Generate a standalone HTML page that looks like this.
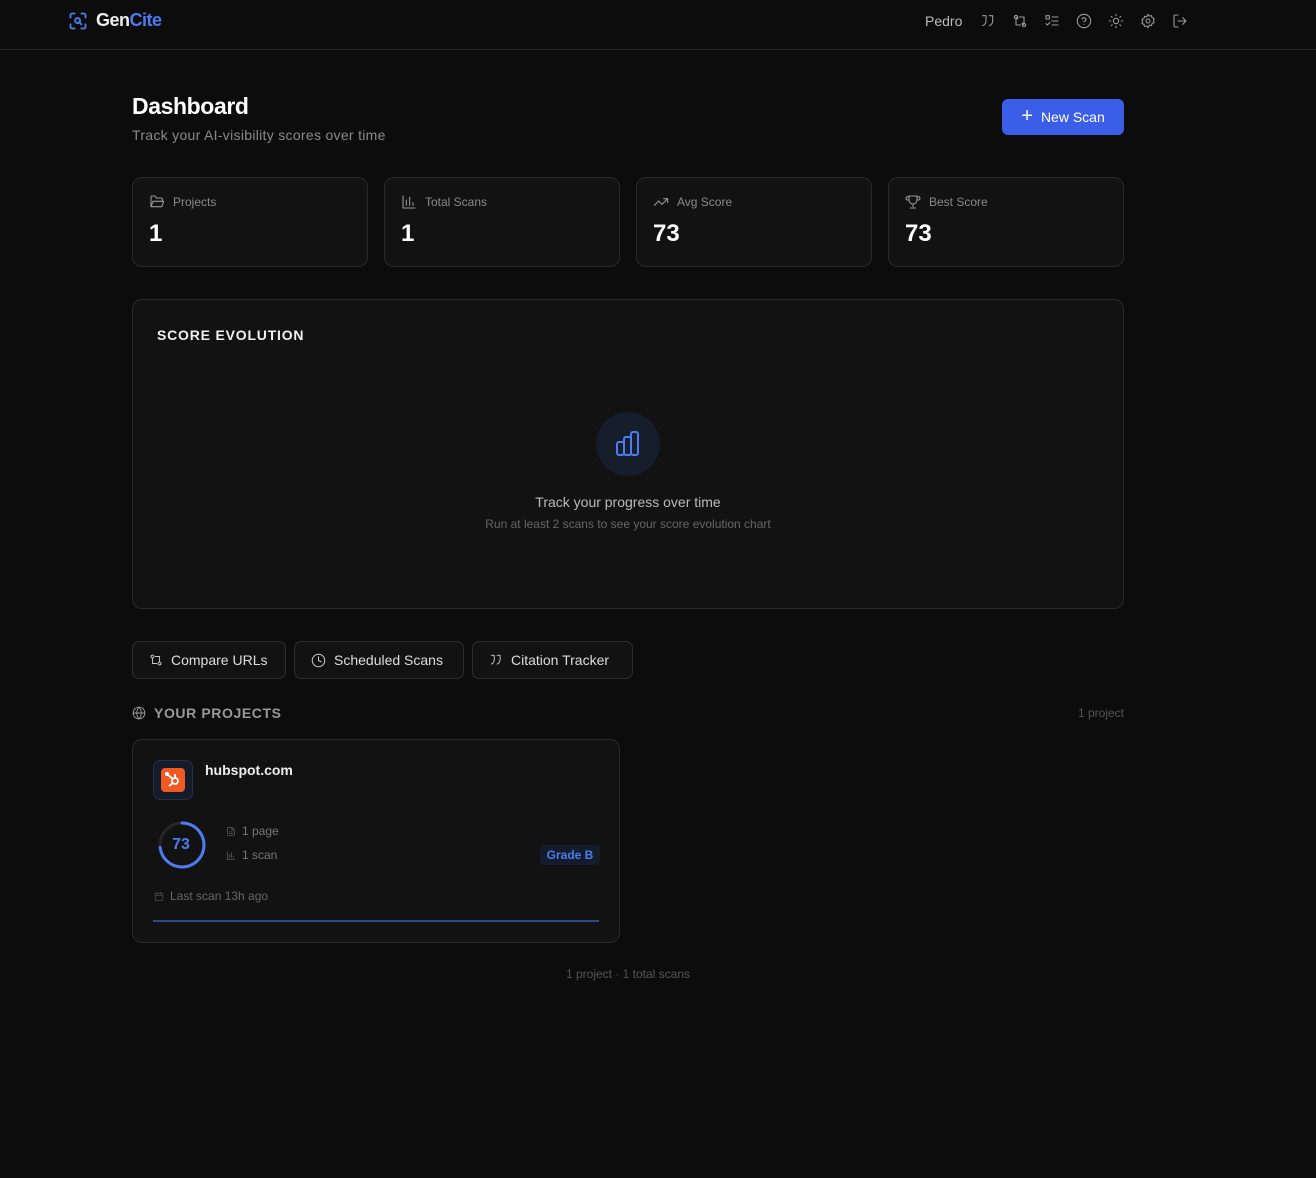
<!DOCTYPE html>
<html><head><meta charset="utf-8"><style>
*{box-sizing:border-box;margin:0;padding:0}
body{width:1316px;height:1178px;background:#0c0c0c;font-family:"Liberation Sans",sans-serif;color:#eee;position:relative;overflow:hidden}
.abs{position:absolute}
.nav{position:absolute;left:0;top:0;width:1316px;height:50px;border-bottom:1px solid #262626}
.card{position:absolute;background:#121212;border:1px solid #2a2a2a;border-radius:10px}
.ic{stroke:#9a9a9a;fill:none;stroke-width:1.6;stroke-linecap:round;stroke-linejoin:round}
.lbl{position:absolute;left:40px;top:17px;font-size:12px;color:#8a8a8a}
.val{position:absolute;left:16px;top:42px;font-size:24px;font-weight:bold;color:#fff}
.btn{position:absolute;top:641px;height:38px;background:#121212;border:1px solid #2e2e2e;border-radius:7px;font-size:14px;color:#ddd;display:flex;align-items:center;gap:8px;padding-left:16px}
</style></head><body>
<div class="nav">
<svg class="abs" style="left:68px;top:11px" width="20" height="20" viewBox="0 0 24 24" fill="none" stroke="#4c7cf0" stroke-width="2.2" stroke-linecap="round"><path d="M3 8V5a2 2 0 0 1 2-2h3M16 3h3a2 2 0 0 1 2 2v3M21 16v3a2 2 0 0 1-2 2h-3M8 21H5a2 2 0 0 1-2-2v-3"/><circle cx="11.5" cy="11.5" r="3"/><path d="M14 14l2 2"/></svg>
<div class="abs" style="left:96px;top:10px;font-size:18px;font-weight:bold;letter-spacing:-0.5px">Gen<span style="color:#4c7cf0">Cite</span></div>
<div class="abs" style="left:925px;top:13px;font-size:14px;color:#bbb">Pedro</div>
<svg class="abs ic" style="left:980px;top:13px" width="16" height="16" viewBox="0 0 24 24"><path d="M4 4h5v7c0 4-2 7-5 8M14 4h5v7c0 4-2 7-5 8"/></svg>
<svg class="abs ic" style="left:1012px;top:13px" width="16" height="16" viewBox="0 0 24 24"><circle cx="6" cy="6" r="2.5"/><circle cx="18" cy="18" r="2.5"/><path d="M6 9v9h7M18 15V6h-7M15 15l3 3M9 9l-3-3"/></svg>
<svg class="abs ic" style="left:1044px;top:13px" width="16" height="16" viewBox="0 0 24 24"><rect x="3" y="4" width="5" height="5"/><path d="M3 16l2 2 4-4M12 6h9M12 12h9M12 18h9"/></svg>
<svg class="abs ic" style="left:1076px;top:13px" width="16" height="16" viewBox="0 0 24 24"><circle cx="12" cy="12" r="10"/><path d="M9.1 9a3 3 0 0 1 5.8 1c0 2-3 3-3 3M12 17h.01"/></svg>
<svg class="abs ic" style="left:1108px;top:13px" width="16" height="16" viewBox="0 0 24 24"><circle cx="12" cy="12" r="4"/><path d="M12 2v2M12 20v2M4.9 4.9l1.4 1.4M17.7 17.7l1.4 1.4M2 12h2M20 12h2M4.9 19.1l1.4-1.4M17.7 6.3l1.4-1.4"/></svg>
<svg class="abs ic" style="left:1140px;top:13px" width="16" height="16" viewBox="0 0 24 24"><circle cx="12" cy="12" r="3"/><path d="M12 2l2 2.5 3.2-.6.9 3.1 3 1.3-1 3.1 1 3.1-3 1.3-.9 3.1-3.2-.6L12 22l-2-2.5-3.2.6-.9-3.1-3-1.3 1-3.1-1-3.1 3-1.3.9-3.1 3.2.6z"/></svg>
<svg class="abs ic" style="left:1172px;top:13px" width="16" height="16" viewBox="0 0 24 24"><path d="M9 21H5a2 2 0 0 1-2-2V5a2 2 0 0 1 2-2h4M16 17l5-5-5-5M21 12H9"/></svg>
</div>

<div class="abs" style="left:132px;top:93px;font-size:23px;font-weight:bold;color:#fff;letter-spacing:-0.4px">Dashboard</div>
<div class="abs" style="left:132px;top:127px;font-size:14px;color:#8a8a8a;letter-spacing:0.3px">Track your AI-visibility scores over time</div>
<div class="abs" style="left:1002px;top:99px;width:122px;height:36px;background:#3b5ee8;border-radius:6px;color:#fff;font-size:14px;display:flex;align-items:center;justify-content:center;gap:8px"><span style="font-size:20px;font-weight:300;margin-top:-2px">+</span>New Scan</div>

<div class="card" style="left:132px;top:177px;width:236px;height:90px"><svg class="abs ic" style="left:16px;top:16px" width="16" height="16" viewBox="0 0 24 24"><path d="M3 19V5a2 2 0 0 1 2-2h4l2 3h7a2 2 0 0 1 2 2v2M3 19l3-8h16l-3 8z"/></svg><div class="lbl">Projects</div><div class="val">1</div></div>
<div class="card" style="left:384px;top:177px;width:236px;height:90px"><svg class="abs ic" style="left:16px;top:16px" width="16" height="16" viewBox="0 0 24 24"><path d="M3 3v18h18M8 17V9M13 17V5M18 17v-4"/></svg><div class="lbl">Total Scans</div><div class="val">1</div></div>
<div class="card" style="left:636px;top:177px;width:236px;height:90px"><svg class="abs ic" style="left:16px;top:16px" width="16" height="16" viewBox="0 0 24 24"><path d="M22 7l-8.5 8.5-5-5L2 17M16 7h6v6"/></svg><div class="lbl">Avg Score</div><div class="val">73</div></div>
<div class="card" style="left:888px;top:177px;width:236px;height:90px"><svg class="abs ic" style="left:16px;top:16px" width="16" height="16" viewBox="0 0 24 24"><path d="M6 9H4a2 2 0 0 1 0-5h2M18 9h2a2 2 0 0 0 0-5h-2M6 3h12v6a6 6 0 0 1-12 0zM12 15v4M8 21h8"/></svg><div class="lbl">Best Score</div><div class="val">73</div></div>

<div class="card" style="left:132px;top:299px;width:992px;height:310px">
<div class="abs" style="left:24px;top:27px;font-size:14px;font-weight:bold;letter-spacing:0.8px;color:#f0f0f0">SCORE EVOLUTION</div>
<div class="abs" style="left:463px;top:112px;width:64px;height:64px;border-radius:50%;background:#161d2b"></div>
<svg class="abs" style="left:483px;top:131px" width="26" height="26" viewBox="0 0 26 26" fill="none" stroke="#4c7cf0" stroke-width="2"><rect x="1" y="11" width="7" height="13" rx="2"/><rect x="8" y="6" width="7" height="18" rx="2"/><rect x="15" y="1" width="7" height="23" rx="2"/></svg>
<div class="abs" style="left:0;width:990px;top:194px;text-align:center;font-size:14px;color:#bbb">Track your progress over time</div>
<div class="abs" style="left:0;width:990px;top:217px;text-align:center;font-size:12px;color:#666">Run at least 2 scans to see your score evolution chart</div>
</div>

<div class="btn" style="left:132px;width:154px"><svg class="ic" style="stroke:#ccc" width="14" height="14" viewBox="0 0 24 24"><circle cx="6" cy="6" r="2.5"/><circle cx="18" cy="18" r="2.5"/><path d="M6 9v9h7M18 15V6h-7"/></svg>Compare URLs</div>
<div class="btn" style="left:294px;width:170px"><svg class="ic" style="stroke:#ccc" width="15" height="15" viewBox="0 0 24 24"><circle cx="12" cy="12" r="10"/><path d="M12 6v6l4 2"/></svg>Scheduled Scans</div>
<div class="btn" style="left:472px;width:161px"><svg class="ic" style="stroke:#ccc" width="14" height="14" viewBox="0 0 24 24"><path d="M4 4h5v7c0 4-2 7-5 8M14 4h5v7c0 4-2 7-5 8"/></svg>Citation Tracker</div>

<svg class="abs ic" style="left:132px;top:706px" width="14" height="14" viewBox="0 0 24 24"><circle cx="12" cy="12" r="10"/><path d="M2 12h20M12 2a15 15 0 0 1 0 20M12 2a15 15 0 0 0 0 20"/></svg>
<div class="abs" style="left:154px;top:705px;font-size:14px;font-weight:bold;color:#999;letter-spacing:0.6px">YOUR PROJECTS</div>
<div class="abs" style="left:1040px;width:84px;text-align:right;top:706px;font-size:12px;color:#555">1 project</div>

<div class="card" style="left:132px;top:739px;width:488px;height:204px">
<div class="abs" style="left:20px;top:20px;width:40px;height:40px;border-radius:7px;background:#141b2a;border:1px solid #263046"></div>
<div class="abs" style="left:28px;top:28px;width:24px;height:24px;border-radius:4px;background:#f05a22"></div>
<svg class="abs" style="left:28px;top:28px" width="24" height="24" viewBox="0 0 24 24" fill="none" stroke="#fff" stroke-width="1.8"><circle cx="14" cy="13" r="3"/><path d="M6 6l6 5M14 10V6M12 15l-4 3"/><circle cx="6" cy="6" r="1.2" fill="#fff"/></svg>
<div class="abs" style="left:72px;top:22px;font-size:14px;font-weight:bold;color:#eee">hubspot.com</div>
<svg class="abs" style="left:24px;top:80px" width="50" height="50" viewBox="0 0 50 50"><circle cx="25" cy="25" r="22" fill="none" stroke="#262626" stroke-width="3"/><circle cx="25" cy="25" r="22" fill="none" stroke="#4c7cf0" stroke-width="3" stroke-dasharray="101 138" transform="rotate(-90 25 25)" stroke-linecap="round"/></svg>
<div class="abs" style="left:23px;top:96px;width:50px;text-align:center;font-size:16px;font-weight:bold;color:#4c7cf0">73</div>
<svg class="abs ic" style="left:93px;top:86px;stroke:#666" width="10" height="11" viewBox="0 0 24 24"><path d="M14 2H6a2 2 0 0 0-2 2v16a2 2 0 0 0 2 2h12a2 2 0 0 0 2-2V8zM14 2v6h6M8 13h8M8 17h8"/></svg>
<div class="abs" style="left:109px;top:84px;font-size:12px;color:#777">1 page</div>
<svg class="abs ic" style="left:93px;top:110px;stroke:#666" width="10" height="11" viewBox="0 0 24 24"><path d="M3 3v18h18M8 17V9M13 17V5M18 17v-4"/></svg>
<div class="abs" style="left:109px;top:108px;font-size:12px;color:#777">1 scan</div>
<div class="abs" style="left:407px;top:105px;width:60px;height:20px;border-radius:4px;background:#141b2a;color:#4c7cf0;font-size:12px;font-weight:bold;text-align:center;line-height:20px">Grade B</div>
<svg class="abs ic" style="left:21px;top:151px;stroke:#555" width="10" height="11" viewBox="0 0 24 24"><rect x="3" y="4" width="18" height="18" rx="2"/><path d="M16 2v4M8 2v4M3 10h18"/></svg>
<div class="abs" style="left:37px;top:149px;font-size:12px;color:#666">Last scan 13h ago</div>
<div class="abs" style="left:20px;top:180px;width:446px;height:2px;background:#2c4a8a"></div>
</div>

<div class="abs" style="left:0;width:1256px;top:967px;text-align:center;font-size:12px;color:#555">1 project · 1 total scans</div>
</body></html>
